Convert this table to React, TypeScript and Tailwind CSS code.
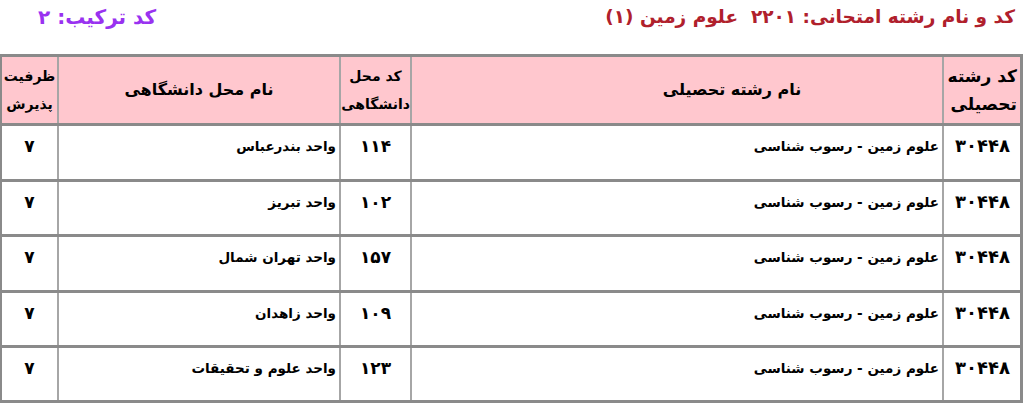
import React from "react";

const rows = [
  { code: "۳۰۴۴۸", field: "علوم زمین - رسوب شناسی", uniCode: "۱۱۴", uni: "واحد بندرعباس", cap: "۷", h: "h-[56px]" },
  { code: "۳۰۴۴۸", field: "علوم زمین - رسوب شناسی", uniCode: "۱۰۲", uni: "واحد تبریز", cap: "۷", h: "h-[55px]" },
  { code: "۳۰۴۴۸", field: "علوم زمین - رسوب شناسی", uniCode: "۱۵۷", uni: "واحد تهران شمال", cap: "۷", h: "h-[56px]" },
  { code: "۳۰۴۴۸", field: "علوم زمین - رسوب شناسی", uniCode: "۱۰۹", uni: "واحد زاهدان", cap: "۷", h: "h-[55px]" },
  { code: "۳۰۴۴۸", field: "علوم زمین - رسوب شناسی", uniCode: "۱۲۳", uni: "واحد علوم و تحقیقات", cap: "۷", h: "h-[55px]" },
];

const grid = "grid grid-cols-[76px_532px_71px_282px_minmax(0,1fr)]";

export default function App() {
  return (
    <div
      dir="rtl"
      className="w-[1023px] h-[407px] bg-white overflow-hidden text-black"
      style={{ fontFamily: '"DejaVu Sans", "Noto Sans", sans-serif' }}
    >
      <div className="h-[54px] flex justify-between items-start pt-[4px] pr-[8px] pl-[38px]">
        <div className="text-[18.5px] font-bold text-[#b0202c] leading-[26px] whitespace-nowrap">
          کد و نام رشته امتحانی: ۲۲۰۱&nbsp;&nbsp;علوم زمین (۱)
        </div>
        <div className="text-[20px] font-bold text-[#9932f0] leading-[26px] whitespace-nowrap">
          کد ترکیب: ۲
        </div>
      </div>
      <div className="border-t-[3px] border-r-[3px] border-b-[3px] border-l-2 border-[#8a8a8a] w-[1023px]">
        <div className={`${grid} h-[66px] bg-[#ffc7ce] font-bold`}>
          <div className="flex flex-col justify-center pr-[3px] text-[17px] leading-[28px] whitespace-nowrap">
            <span>کد رشته</span>
            <span>تحصیلی</span>
          </div>
          <div className="border-r-2 border-[#a6a6a6] flex items-center justify-center pl-[110px] text-[16px]">
            نام رشته تحصیلی
          </div>
          <div className="border-r-2 border-[#a6a6a6] flex flex-col justify-center items-center text-[14px] leading-[28px] whitespace-nowrap">
            <span>کد محل</span>
            <span>دانشگاهی</span>
          </div>
          <div className="border-r-2 border-[#a6a6a6] flex items-center justify-center text-[16px]">
            نام محل دانشگاهی
          </div>
          <div className="border-r-2 border-[#a6a6a6] flex flex-col justify-center items-center text-[14px] leading-[28px] whitespace-nowrap">
            <span>ظرفیت</span>
            <span>پذیرش</span>
          </div>
        </div>
        {rows.map((r, i) => (
          <div key={i} className={`${grid} ${r.h} border-t-[3px] border-[#8a8a8a] font-bold`}>
            <div className="pt-[9px] pr-[10px] text-[18px] leading-[22px] whitespace-nowrap">{r.code}</div>
            <div className="border-r-2 border-[#a6a6a6] pt-[10px] pr-[3px] text-[13.5px] leading-[20px] whitespace-nowrap">
              {r.field}
            </div>
            <div className="border-r-2 border-[#a6a6a6] pt-[9px] text-center text-[17px] leading-[22px]">
              {r.uniCode}
            </div>
            <div className="border-r-2 border-[#a6a6a6] pt-[10px] pr-[3px] text-[13.5px] leading-[20px] whitespace-nowrap">
              {r.uni}
            </div>
            <div className="border-r-2 border-[#a6a6a6] pt-[9px] text-center text-[17px] leading-[22px]">
              {r.cap}
            </div>
          </div>
        ))}
      </div>
    </div>
  );
}
